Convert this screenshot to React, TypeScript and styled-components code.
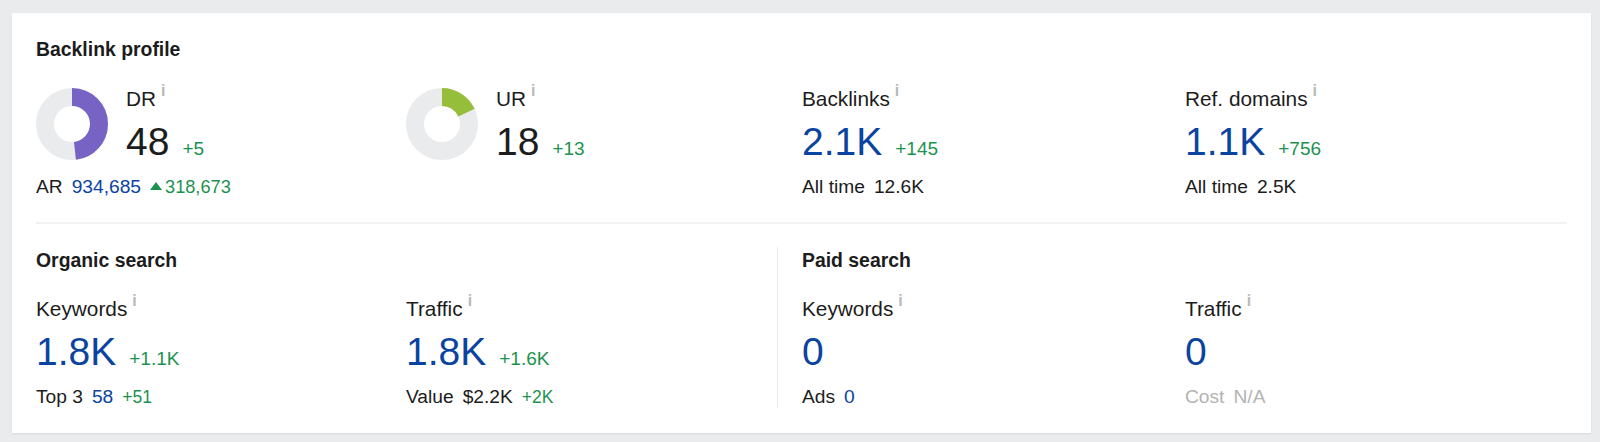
import React from 'react'
import styled, { createGlobalStyle } from 'styled-components'

const Global = createGlobalStyle`
    html, body { margin: 0; padding: 0; }
    body {
        background: #e9ebed;
        font-family: "Liberation Sans", Arial, sans-serif;
        color: #1c1c1c;
    }
`

const Page = styled.div`
    width: 1600px;
    height: 442px;
    padding: 13px 9px 9px 12px;
    box-sizing: border-box;
    overflow: hidden;
`

const Card = styled.div`
    background: #fff;
    height: 420px;
    padding: 24px 24px 0 24px;
    box-sizing: border-box;
    box-shadow: 0 1px 2px rgba(0, 0, 0, 0.08);
`

const Heading = styled.div`
    font-size: 19.4px;
    font-weight: 700;
    line-height: 24px;
    height: 24px;
`

const TopRow = styled.div`
    display: grid;
    grid-template-columns: 370px 396px 383px 1fr;
    margin-top: 25px;
    height: 136px;
    border-bottom: 2px solid #f1f2f3;
`

const BottomRow = styled.div`
    display: grid;
    grid-template-columns: 741px 1fr;
    margin-top: 23px;
`

const Section = styled.div<{ $divided?: boolean }>`
    padding: 1px 0 0 ${p => (p.$divided ? '24px' : '0')};
    border-left: ${p => (p.$divided ? '1px solid #e9ebed' : 'none')};
    height: 160px;
`

const SectionColumns = styled.div<{ $first: number }>`
    display: grid;
    grid-template-columns: ${p => p.$first}px 1fr;
    margin-top: 24px;
`

const GaugeRow = styled.div`
    display: flex;
    gap: 18px;
`

const Gauge = styled.svg`
    display: block;
    width: 72px;
    height: 72px;
    margin-top: 2px;
    flex: none;
`

const Label = styled.div`
    font-size: 20.8px;
    line-height: 26px;
    height: 26px;
    white-space: nowrap;
`

const Info = styled.sup`
    font-size: 16px;
    font-weight: 700;
    color: #b9b9b9;
    line-height: 0;
    margin-left: 5px;
    vertical-align: 10px;
`

const ValueRow = styled.div`
    display: flex;
    align-items: baseline;
    gap: 13px;
    height: 46px;
    line-height: 46px;
    margin-top: 7px;
`

const Value = styled.span<{ $link?: boolean }>`
    font-size: 39px;
    color: ${p => (p.$link ? '#0b44a0' : '#1c1c1c')};
`

const Delta = styled.span`
    font-size: 19px;
    color: #1d9250;
`

const SubRow = styled.div<{ $muted?: boolean }>`
    display: flex;
    align-items: baseline;
    gap: 9px;
    font-size: 19.2px;
    line-height: 24px;
    height: 24px;
    margin-top: 10px;
    color: ${p => (p.$muted ? '#b3b3b3' : '#1c1c1c')};
`

const SubLink = styled.span`
    color: #0b44a0;
`

const SubDelta = styled.span<{ $size?: number }>`
    font-size: ${p => p.$size ?? 18.2}px;
    color: #1d9250;
`

const Triangle = styled.i`
    display: inline-block;
    width: 0;
    height: 0;
    border-left: 6px solid transparent;
    border-right: 6px solid transparent;
    border-bottom: 8px solid #1d9250;
    margin-right: 3px;
    position: relative;
    top: -3px;
`

const Donut = ({ percent, color }: { percent: number; color: string }) => {
    const r = 27
    const len = 2 * Math.PI * r
    return (
        <Gauge viewBox="0 0 72 72">
            <circle cx="36" cy="36" r={r} fill="none" stroke="#e9ebed" strokeWidth="18" />
            <circle
                cx="36"
                cy="36"
                r={r}
                fill="none"
                stroke={color}
                strokeWidth="18"
                strokeDasharray={`${(len * percent) / 100} ${len}`}
                transform="rotate(-90 36 36)"
            />
        </Gauge>
    )
}

interface MetricProps {
    label: string
    value: string
    delta?: string
    link?: boolean
    children?: React.ReactNode
}

const Metric = ({ label, value, delta, link, children }: MetricProps) => (
    <div>
        <Label>
            {label}
            <Info>i</Info>
        </Label>
        <ValueRow>
            <Value $link={link}>{value}</Value>
            {delta && <Delta>{delta}</Delta>}
        </ValueRow>
        {children}
    </div>
)

export default function App() {
    return (
        <Page>
            <Global />
            <Card>
                <Heading>Backlink profile</Heading>
                <TopRow>
                    <div>
                        <GaugeRow>
                            <Donut percent={48} color="#7763c4" />
                            <Metric label="DR" value="48" delta="+5" />
                        </GaugeRow>
                        <SubRow>
                            <span>AR</span>
                            <SubLink>934,685</SubLink>
                            <SubDelta>
                                <Triangle />
                                318,673
                            </SubDelta>
                        </SubRow>
                    </div>
                    <GaugeRow>
                        <Donut percent={18} color="#95bf3a" />
                        <Metric label="UR" value="18" delta="+13" />
                    </GaugeRow>
                    <Metric label="Backlinks" value="2.1K" delta="+145" link>
                        <SubRow>
                            <span>All time</span>
                            <span>12.6K</span>
                        </SubRow>
                    </Metric>
                    <Metric label="Ref. domains" value="1.1K" delta="+756" link>
                        <SubRow>
                            <span>All time</span>
                            <span>2.5K</span>
                        </SubRow>
                    </Metric>
                </TopRow>
                <BottomRow>
                    <Section>
                        <Heading>Organic search</Heading>
                        <SectionColumns $first={370}>
                            <Metric label="Keywords" value="1.8K" delta="+1.1K" link>
                                <SubRow>
                                    <span>Top 3</span>
                                    <SubLink>58</SubLink>
                                    <SubDelta $size={17.5}>+51</SubDelta>
                                </SubRow>
                            </Metric>
                            <Metric label="Traffic" value="1.8K" delta="+1.6K" link>
                                <SubRow>
                                    <span>Value</span>
                                    <span>$2.2K</span>
                                    <SubDelta $size={17.5}>+2K</SubDelta>
                                </SubRow>
                            </Metric>
                        </SectionColumns>
                    </Section>
                    <Section $divided>
                        <Heading>Paid search</Heading>
                        <SectionColumns $first={383}>
                            <Metric label="Keywords" value="0" link>
                                <SubRow>
                                    <span>Ads</span>
                                    <SubLink>0</SubLink>
                                </SubRow>
                            </Metric>
                            <Metric label="Traffic" value="0" link>
                                <SubRow $muted>
                                    <span>Cost</span>
                                    <span>N/A</span>
                                </SubRow>
                            </Metric>
                        </SectionColumns>
                    </Section>
                </BottomRow>
            </Card>
        </Page>
    )
}
